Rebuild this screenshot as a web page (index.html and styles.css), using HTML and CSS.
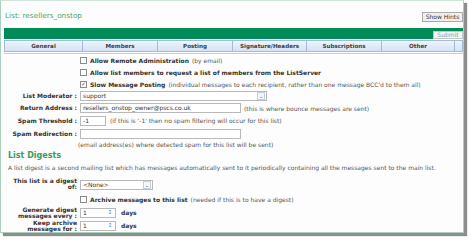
FILE: index.html
```html
<!doctype html>
<html lang="en">
  <head>
    <meta charset="UTF-8" />
    <title>List: resellers_onstop</title>
    <link rel="stylesheet" href="styles.css">
  </head>
  <body>
    <div class="panel">
      <div class="top">
        <span class="list-title">List: resellers_onstop</span>
        <button class="hint-btn">Show Hints</button>
      </div>

      <div class="bar">
        <button class="submit-btn" disabled>Submit</button>
      </div>

      <div class="tabs">
        <div class="tab">General</div>
        <div class="tab">Members</div>
        <div class="tab">Posting</div>
        <div class="tab">Signature/Headers</div>
        <div class="tab">Subscriptions</div>
        <div class="tab">Other</div>
        <div class="tab tab-end"></div>
      </div>

      <div class="form">
        <div class="row">
          <div class="label"></div>
          <div class="field">
            <span class="box"></span>
            <b>Allow Remote Administration</b> (by email)
          </div>
        </div>
        <div class="row">
          <div class="label"></div>
          <div class="field">
            <span class="box"></span>
            <b>Allow list members to request a list of members from the ListServer</b>
          </div>
        </div>
        <div class="row">
          <div class="label"></div>
          <div class="field">
            <span class="box">&#10003;</span>
            <b>Slow Message Posting</b> (individual messages to each recipient, rather than one message BCC'd to them all)
          </div>
        </div>
        <div class="row">
          <div class="label">List Moderator :</div>
          <div class="field">
            <span class="select sel-wide">support<span class="arrow">&#8964;</span></span>
          </div>
        </div>
        <div class="row">
          <div class="label">Return Address :</div>
          <div class="field">
            <span class="input in-addr">resellers_onstop_owner@pscs.co.uk</span>
            <span>(this is where bounce messages are sent)</span>
          </div>
        </div>
        <div class="row row-input">
          <div class="label">Spam Threshold :</div>
          <div class="field">
            <span class="input in-small">-1</span>
            <span>(if this is '-1' then no spam filtering will occur for this list)</span>
          </div>
        </div>
        <div class="row row-input">
          <div class="label">Spam Redirection :</div>
          <div class="field">
            <span class="input in-addr"></span>
          </div>
        </div>
        <div class="row row-note">
          <div class="label"></div>
          <div class="field field-note">(email address(es) where detected spam for this list will be sent)</div>
        </div>

        <h2 class="section">List Digests</h2>
        <p class="desc">A list digest is a second mailing list which has messages automatically sent to it periodically containing all the messages sent to the main list.</p>

        <div class="row row-digest">
          <div class="label">This list is a digest of:</div>
          <div class="field field-low">
            <span class="select sel-digest">&lt;None&gt;<span class="arrow">&#8964;</span></span>
          </div>
        </div>
        <div class="row row-input">
          <div class="label"></div>
          <div class="field">
            <span class="box"></span>
            <b>Archive messages to this list</b> (needed if this is to have a digest)
          </div>
        </div>
        <div class="row row-input">
          <div class="label">Generate digest messages every :</div>
          <div class="field">
            <span class="input in-spin">1<span class="spin">&#8597;</span></span>
            <b>days</b>
          </div>
        </div>
        <div class="row row-input">
          <div class="label">Keep archive messages for :</div>
          <div class="field">
            <span class="input in-spin">1<span class="spin">&#8597;</span></span>
            <b>days</b>
          </div>
        </div>
      </div>
    </div>
  </body>
</html>
```

FILE: styles.css
```css
* {
  margin: 0;
  padding: 0;
  box-sizing: border-box;
}

body {
  font-family: "DejaVu Sans", Verdana, sans-serif;
  font-size: 6px;
  color: #555;
  background: #fff;
  width: 472px;
  height: 241px;
}

.panel {
  width: 464px;
  height: 233px;
  background: #fdfdfd;
  border: 1px solid #a8d0bd;
  border-top-color: #cfe6d9;
  box-shadow: 3px 3px 1px #8e8e8e;
  padding: 0 0 0 3px;
}

.top {
  display: flex;
  justify-content: space-between;
  align-items: center;
  height: 27px;
}

.list-title {
  color: #45a56c;
  font-size: 7.3px;
  padding-left: 1px;
  margin-top: 1px;
}

.hint-btn {
  font-family: inherit;
  font-size: 6px;
  color: #333;
  background: #efefef;
  border: 1px solid #aaa;
  height: 10px;
  width: 41px;
  line-height: 8px;
  margin-top: 4px;
}

.bar {
  position: relative;
  background: #008b59;
  height: 11px;
}

.submit-btn {
  position: absolute;
  right: 0;
  top: 3px;
  width: 30px;
  font-family: inherit;
  font-size: 6px;
  color: #9a9a9a;
  background: #f4f4f4;
  border: 1px solid #c6c6c6;
  height: 8px;
  line-height: 6px;
}

.tabs {
  display: grid;
  grid-template-columns: 78px 75px 75px 74px 75px 73px 1fr;
  height: 12px;
  margin-top: 1px;
  border-top: 1px solid #a3bbd6;
  border-bottom: 1px solid #a3bbd6;
  background: linear-gradient(#edf4fc, #d4e3f5);
}

.tab {
  display: flex;
  align-items: center;
  justify-content: center;
  font-weight: bold;
  color: #404040;
  font-size: 5.6px;
  border-left: 1px solid #a3bbd6;
}

.tab-end {
  border-right: 1px solid #a3bbd6;
}

.form {
  border-top: 1px solid #b5dac6;
  margin-top: 1px;
}

.row {
  display: grid;
  grid-template-columns: 73px 1fr;
  column-gap: 3px;
  align-items: center;
  height: 12px;
}

.row-input {
  height: 13px;
}

.row-note {
  height: 9px;
}

.row-digest {
  height: 19px;
}

.label {
  text-align: right;
  font-weight: bold;
  color: #333;
  line-height: 6px;
}

.field {
  display: flex;
  align-items: center;
  gap: 3px;
  white-space: nowrap;
}

.field b {
  color: #333;
}

.field-note {
  margin-left: -2px;
}

.field-low {
  align-self: end;
  margin-bottom: 3px;
}

.box {
  display: inline-flex;
  align-items: center;
  justify-content: center;
  width: 7px;
  height: 7px;
  border: 1px solid #8c8c8c;
  background: #fff;
  font-size: 5.5px;
  color: #222;
}

.select,
.input {
  display: inline-flex;
  align-items: center;
  justify-content: space-between;
  height: 10px;
  line-height: 8px;
  border: 1px solid #b9b9b9;
  background: #fff;
  padding-left: 2px;
  color: #333;
}

.sel-wide {
  width: 187px;
}

.sel-digest {
  width: 73px;
}

.in-addr {
  width: 161px;
}

.in-small {
  width: 26px;
  margin-right: 1px;
}

.in-spin {
  width: 36px;
  margin-right: 2px;
}

.arrow,
.spin {
  display: inline-flex;
  align-items: center;
  justify-content: center;
  width: 8px;
  height: 8px;
  margin-right: 1px;
  border: 1px solid #c4cfdc;
  background: #f3f6fa;
  color: #5c7ba6;
  font-size: 5.5px;
  line-height: 5px;
}

.spin {
  border-color: transparent;
  background: none;
}

.section {
  color: #3c9a62;
  font-size: 8px;
  font-weight: bold;
  height: 13px;
  line-height: 13px;
  padding-left: 4px;
}

.desc {
  padding-left: 4px;
  height: 12px;
  line-height: 12px;
}
```
